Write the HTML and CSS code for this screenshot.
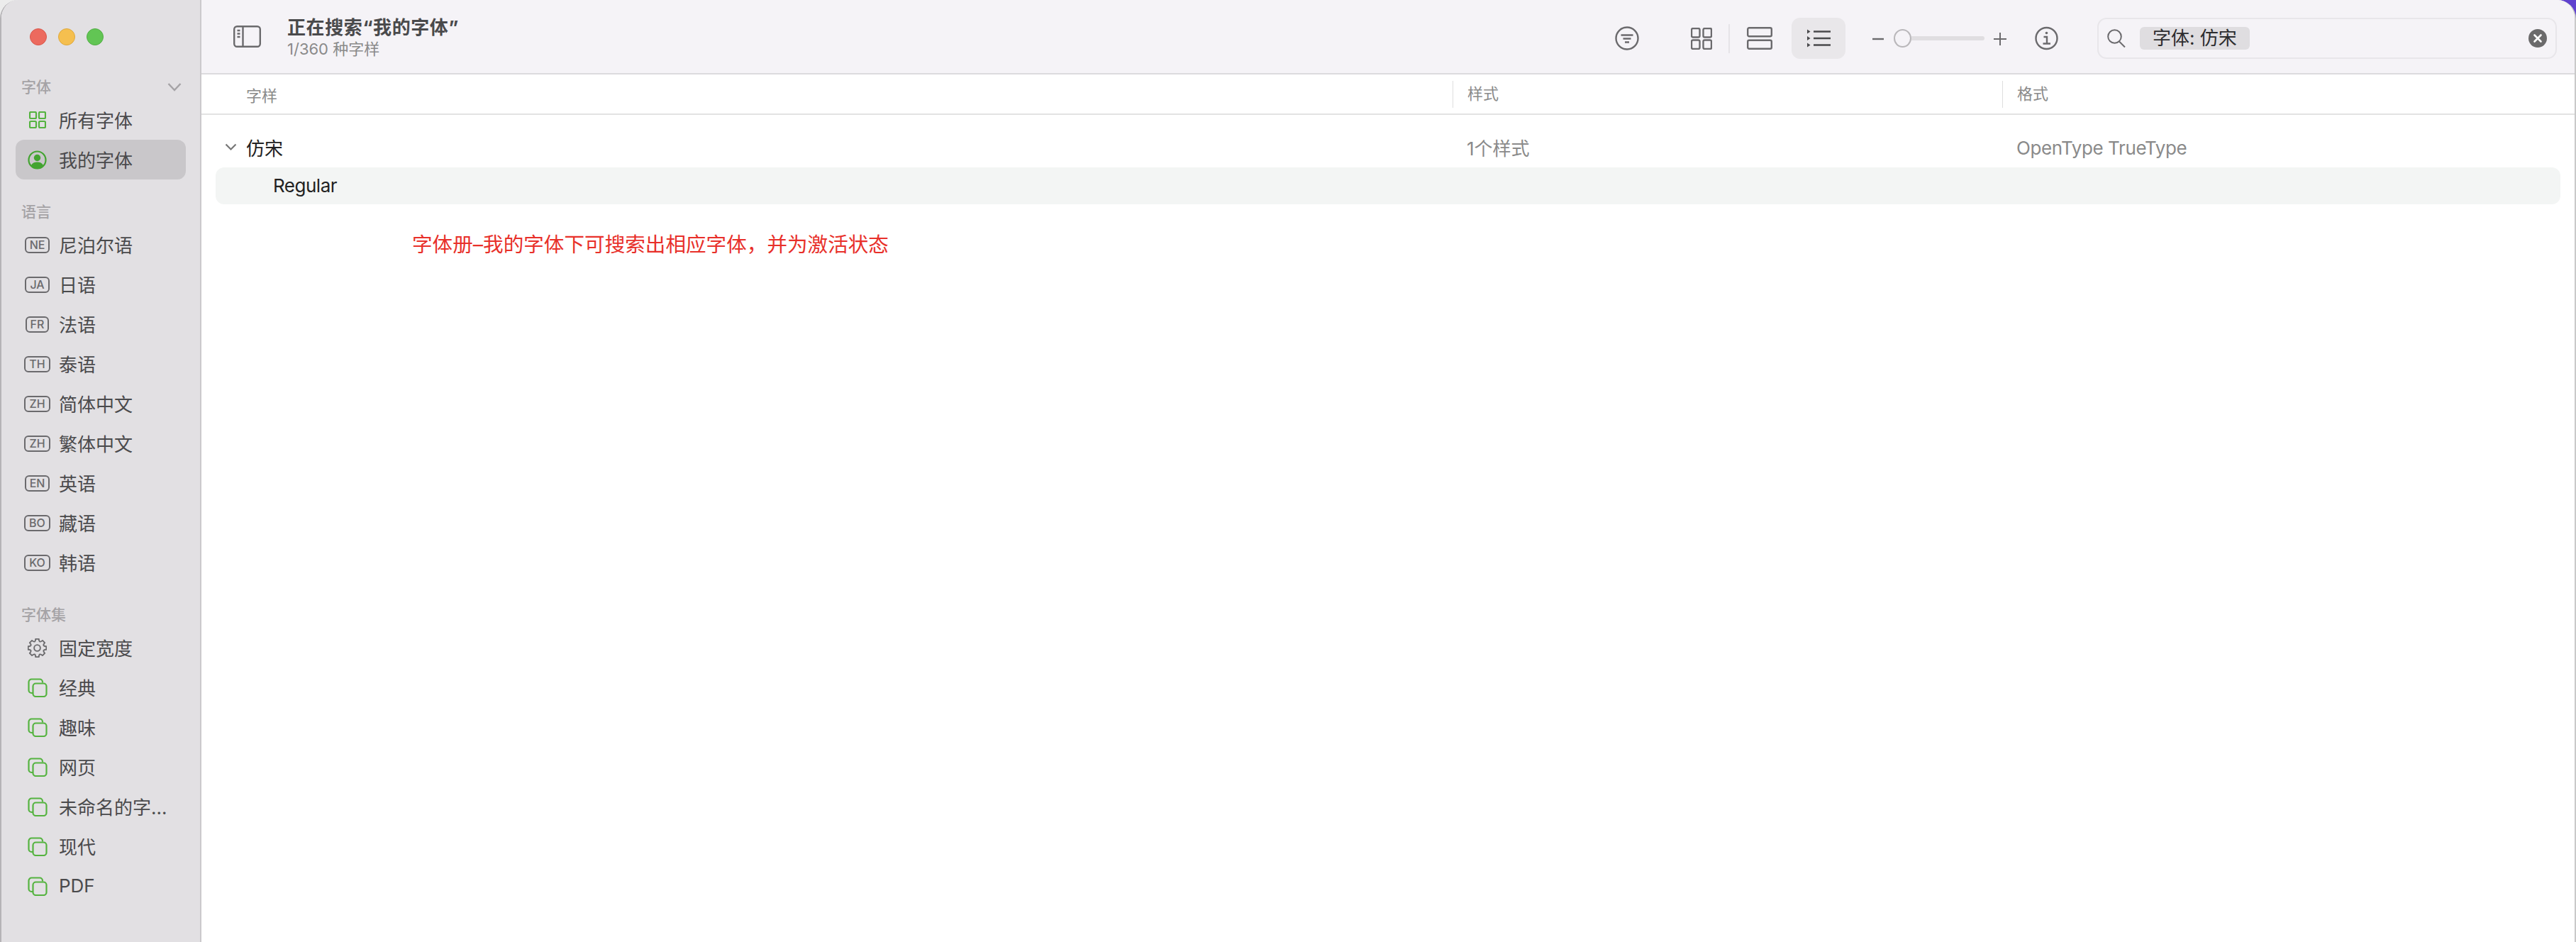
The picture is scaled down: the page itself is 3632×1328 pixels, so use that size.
FILE: index.html
```html
<!DOCTYPE html>
<html lang="zh-CN">
<head>
    <meta charset="UTF-8">
    <title>字体册</title>
    <link rel="stylesheet" href="styles.css">
</head>
<body>
<svg class="icon-defs" width="0" height="0">
    <symbol id="icon-collection" viewBox="0 0 28 27">
        <path d="M21 6.500V5.500a4 4 0 0 0-4-4H5.500a4 4 0 0 0-4 4V17a4 4 0 0 0 4 4h2"/>
        <rect x="7.500" y="7.500" width="19" height="18.500" rx="4"/>
    </symbol>
</svg>

<div class="window">
    <aside class="sidebar">
        <div class="traffic-lights">
            <span class="light light-red"></span>
            <span class="light light-yellow"></span>
            <span class="light light-green"></span>
        </div>

        <div class="section-label">
            <span>字体</span>
            <svg class="section-chevron" width="20" height="13" viewBox="0 0 20 13"><path d="M1.500 2l8.500 9 8.500-9"/></svg>
        </div>
        <div class="side-item">
            <span class="side-icon">
                <svg class="icon-green" width="24" height="24" viewBox="0 0 24 24">
                    <rect x="1" y="1" width="9" height="9" rx="1.500"/>
                    <rect x="14" y="1" width="9" height="9" rx="1.500"/>
                    <rect x="1" y="14" width="9" height="9" rx="1.500"/>
                    <rect x="14" y="14" width="9" height="9" rx="1.500"/>
                </svg>
            </span>
            所有字体
        </div>
        <div class="side-item selected">
            <span class="side-icon">
                <svg width="27" height="27" viewBox="0 0 27 27">
                    <circle cx="13.500" cy="13.500" r="12" fill="none" stroke="#43a431" stroke-width="2.200"/>
                    <circle cx="13.500" cy="10.500" r="4.700" fill="#43a431"/>
                    <path d="M4.800 21.500c1.800-3.800 5-5 8.700-5s6.900 1.200 8.700 5a12 12 0 0 1-17.400 0z" fill="#43a431"/>
                </svg>
            </span>
            我的字体
        </div>

        <div class="section-label spaced">语言</div>
        <div class="side-item"><span class="side-icon"><span class="lang-badge">NE</span></span>尼泊尔语</div>
        <div class="side-item"><span class="side-icon"><span class="lang-badge">JA</span></span>日语</div>
        <div class="side-item"><span class="side-icon"><span class="lang-badge">FR</span></span>法语</div>
        <div class="side-item"><span class="side-icon"><span class="lang-badge">TH</span></span>泰语</div>
        <div class="side-item"><span class="side-icon"><span class="lang-badge">ZH</span></span>简体中文</div>
        <div class="side-item"><span class="side-icon"><span class="lang-badge">ZH</span></span>繁体中文</div>
        <div class="side-item"><span class="side-icon"><span class="lang-badge">EN</span></span>英语</div>
        <div class="side-item"><span class="side-icon"><span class="lang-badge">BO</span></span>藏语</div>
        <div class="side-item"><span class="side-icon"><span class="lang-badge">KO</span></span>韩语</div>

        <div class="section-label spaced">字体集</div>
        <div class="side-item">
            <span class="side-icon">
                <svg class="icon-gear" width="27" height="27" viewBox="0 0 26 26">
                    <path d="M10.830.690L15.170.690Q15.490 7 20.170 2.760L23.240 5.830Q19 10.510 25.310 10.830L25.310 15.170Q19 15.490 23.240 20.170L20.170 23.240Q15.490 19 15.170 25.310L10.830 25.310Q10.510 19 5.830 23.240L2.760 20.170Q7 15.490.690 15.170L.690 10.830Q7 10.510 2.760 5.830L5.830 2.760Q10.510 7 10.830.690Z"/>
                    <circle cx="13" cy="13" r="4.200"/>
                </svg>
            </span>
            固定宽度
        </div>
        <div class="side-item"><span class="side-icon"><svg class="icon-green" width="28" height="27"><use href="#icon-collection"/></svg></span>经典</div>
        <div class="side-item"><span class="side-icon"><svg class="icon-green" width="28" height="27"><use href="#icon-collection"/></svg></span>趣味</div>
        <div class="side-item"><span class="side-icon"><svg class="icon-green" width="28" height="27"><use href="#icon-collection"/></svg></span>网页</div>
        <div class="side-item"><span class="side-icon"><svg class="icon-green" width="28" height="27"><use href="#icon-collection"/></svg></span>未命名的字…</div>
        <div class="side-item"><span class="side-icon"><svg class="icon-green" width="28" height="27"><use href="#icon-collection"/></svg></span>现代</div>
        <div class="side-item"><span class="side-icon"><svg class="icon-green" width="28" height="27"><use href="#icon-collection"/></svg></span>PDF</div>
    </aside>

    <main class="main">
        <header class="toolbar">
            <svg class="tool-icon toggle-icon" width="39" height="31" viewBox="0 0 39 31">
                <rect x="1.200" y="1.200" width="36.600" height="28.600" rx="4"/>
                <path d="M13.500 1.500v28M5.500 7h4M5.500 11.500h4M5.500 16h4"/>
            </svg>
            <div class="title-block">
                <div class="title">正在搜索“我的字体”</div>
                <div class="subtitle">1/360 种字样</div>
            </div>

            <div class="tools">
                <svg class="tool-icon filter-icon" width="34" height="34" viewBox="0 0 34 34">
                    <circle cx="17" cy="17" r="15.500"/>
                    <path d="M8.500 12.500h17M11.500 17.500h11M14 22.500h6"/>
                </svg>
                <svg class="tool-icon grid-icon" width="30" height="31" viewBox="0 0 30 31">
                    <rect x="1" y="1" width="11.500" height="12.500" rx="2"/>
                    <rect x="17.500" y="1" width="11.500" height="12.500" rx="2"/>
                    <rect x="1" y="17.500" width="11.500" height="12.500" rx="2"/>
                    <rect x="17.500" y="17.500" width="11.500" height="12.500" rx="2"/>
                </svg>
                <span class="tool-sep"></span>
                <svg class="tool-icon rows-icon" width="36" height="32" viewBox="0 0 36 32">
                    <rect x="1.200" y="1.200" width="33.600" height="12" rx="2"/>
                    <rect x="1.200" y="18.800" width="33.600" height="12" rx="2"/>
                </svg>
                <span class="list-button">
                    <svg width="33" height="26" viewBox="0 0 33 26">
                        <path class="list-marks" d="M0 .500l4.500 3-4.500 3zM0 10l4.500 3-4.500 3zM0 19.500l4.500 3-4.500 3z"/>
                        <path class="list-lines" d="M9 3.500h24M9 13h24M9 22.500h24"/>
                    </svg>
                </span>
                <svg class="tool-icon minus-icon" width="16" height="4" viewBox="0 0 16 4"><path d="M0 2h16"/></svg>
                <div class="slider">
                    <span class="slider-thumb"></span>
                    <span class="slider-track"></span>
                </div>
                <svg class="tool-icon plus-icon" width="18" height="18" viewBox="0 0 18 18"><path d="M0 9h18M9 0v18"/></svg>
                <svg class="tool-icon info-icon" width="33" height="34" viewBox="0 0 33 34">
                    <circle cx="16.500" cy="17" r="15"/>
                    <circle class="info-dot" cx="16.500" cy="9.500" r="1.800"/>
                    <path d="M12.500 15h4.500v9M11.500 24.500h10.500"/>
                </svg>
                <div class="search-box">
                    <svg class="tool-icon search-icon" width="26" height="26" viewBox="0 0 26 26">
                        <circle cx="10.500" cy="10.500" r="9.300"/>
                        <path d="M17 17.500l8 8"/>
                    </svg>
                    <span class="search-token">字体: 仿宋</span>
                    <svg class="search-clear" width="26" height="26" viewBox="0 0 26 26">
                        <circle cx="13" cy="13" r="13" fill="#6b6a6b"/>
                        <path d="M8.500 8.500l9 9M17.500 8.500l-9 9" stroke="#fff" stroke-width="2.600" stroke-linecap="round"/>
                    </svg>
                </div>
            </div>
        </header>

        <div class="table-head">
            <div class="col col-name">字样</div>
            <div class="col col-sep">样式</div>
            <div class="col col-sep">格式</div>
        </div>

        <div class="font-list">
            <div class="font-row">
                <div class="col col-name font-name">
                    <svg class="row-chevron" width="17" height="10" viewBox="0 0 17 10"><path d="M1.500 1.500l7 7 7-7"/></svg>
                    仿宋
                </div>
                <div class="col font-meta">1个样式</div>
                <div class="col font-meta latin-meta">OpenType TrueType</div>
            </div>
            <div class="style-row">Regular</div>
            <p class="note">字体册–我的字体下可搜索出相应字体，并为激活状态</p>
        </div>
    </main>
</div>
</body>
</html>
```

FILE: styles.css
```css
:root {
    --sidebar-bg: #e2e0e3;
    --toolbar-bg: #f5f3f7;
    --text: #4a4a4c;
    --muted: #8a8a8a;
    --label: #a5a3a6;
    --icon: #6b6a6d;
    --green: #55b340;
    --line: #e3e3e3;
}

* {
    margin: 0;
    padding: 0;
    box-sizing: border-box;
}

body {
    height: 1328px;
    overflow: hidden;
    font-family: "Inter", "Noto Sans CJK SC", sans-serif;
    background: linear-gradient(90deg, #ececec 50%, #5f41cf 50%);
}

.icon-defs {
    display: block;
    height: 0;
}

.window {
    display: flex;
    height: 1328px;
    overflow: hidden;
    border-left: 2px solid #b5b3b6;
    border-right: 2px solid #c9c9c9;
    border-radius: 26px 26px 0 0;
    background-color: #fff;
}

/* sidebar */

.sidebar {
    flex: 0 0 282px;
    padding: 0 20px;
    background-color: var(--sidebar-bg);
    border-right: 2px solid #cbc9cc;
}

.traffic-lights {
    display: flex;
    gap: 16px;
    align-items: center;
    height: 103px;
    padding-left: 20px;
}

.light {
    width: 24px;
    height: 24px;
    border-radius: 50%;
}

.light-red {
    background-color: #ec6a5e;
    border: 1px solid #d9574b;
}

.light-yellow {
    background-color: #f5bf4f;
    border: 1px solid #dea83c;
}

.light-green {
    background-color: #62c554;
    border: 1px solid #52ad45;
}

.section-label {
    display: flex;
    align-items: center;
    justify-content: space-between;
    height: 38px;
    padding: 0 6px 2px 8px;
    font-size: 21px;
    font-weight: 500;
    color: var(--label);
}

.section-label.spaced {
    margin-top: 26px;
}

.section-chevron {
    margin-top: 2px;
    fill: none;
    stroke: var(--label);
    stroke-width: 2.500;
}

.side-item {
    display: flex;
    align-items: center;
    height: 56px;
    padding-bottom: 2px;
    font-size: 26px;
    white-space: nowrap;
    color: var(--text);
    border-radius: 12px;
}

.side-item.selected {
    background-color: #c9c7ca;
}

.side-icon {
    display: flex;
    flex: 0 0 61px;
    justify-content: center;
    margin-top: 2px;
}

.icon-green {
    fill: none;
    stroke: var(--green);
    stroke-width: 2.200;
}

.icon-gear {
    fill: none;
    stroke: var(--icon);
    stroke-width: 1.800;
    stroke-linejoin: round;
}

.lang-badge {
    height: 23px;
    padding: 0 5px;
    font-size: 16px;
    font-weight: 500;
    line-height: 19px;
    color: var(--icon);
    border: 2px solid var(--icon);
    border-radius: 6px;
}

/* toolbar */

.main {
    display: flex;
    flex: 1;
    flex-direction: column;
    min-width: 0;
}

.toolbar {
    display: flex;
    flex: 0 0 105px;
    align-items: center;
    padding: 5px 25px 0 45px;
    background-color: var(--toolbar-bg);
    border-bottom: 2px solid #dcdbde;
}

.tool-icon {
    flex: none;
    fill: none;
    stroke: var(--icon);
    stroke-width: 2.400;
}

.toggle-icon {
    margin-top: -6px;
}

.title-block {
    margin-left: 37px;
    white-space: nowrap;
}

.title {
    font-size: 26px;
    font-weight: 700;
    line-height: 30px;
    letter-spacing: .6px;
    color: var(--text);
}

.subtitle {
    font-size: 22px;
    line-height: 30px;
    color: var(--muted);
}

.tools {
    display: flex;
    align-items: center;
    margin-left: auto;
}

.grid-icon {
    margin-left: 73px;
}

.tool-sep {
    width: 2px;
    height: 41px;
    margin: 0 24px 0 23px;
    background-color: #e6e4e8;
}

.list-button {
    display: flex;
    align-items: center;
    justify-content: center;
    width: 76px;
    height: 58px;
    margin-left: 27px;
    background-color: #e9e7ea;
    border-radius: 12px;
}

.list-marks {
    fill: var(--text);
}

.list-lines {
    fill: none;
    stroke: var(--text);
    stroke-width: 2.600;
}

.minus-icon {
    margin: 2px 14px 0 38px;
}

.slider {
    display: flex;
    align-items: center;
    width: 128px;
}

.slider-thumb {
    flex: none;
    width: 25px;
    height: 26px;
    background-color: var(--toolbar-bg);
    border: 2px solid #b9b7ba;
    border-radius: 50%;
}

.slider-track {
    flex: 1;
    height: 6px;
    background-color: #e0dee1;
    border-radius: 0 3px 3px 0;
}

.plus-icon {
    stroke-width: 2;
    margin: 2px 0 0 13px;
}

.info-icon {
    margin-left: 40px;
}

.info-dot {
    fill: var(--icon);
    stroke: none;
}

.search-box {
    display: flex;
    align-items: center;
    width: 648px;
    height: 58px;
    margin-left: 55px;
    padding: 0 12px 0 12px;
    border: 2px solid #e8e6ea;
    border-radius: 13px;
}

.search-icon {
    stroke-width: 2;
}

.search-token {
    padding: 0 18px;
    margin-left: 20px;
    font-size: 26px;
    line-height: 32px;
    white-space: nowrap;
    color: #2c2c2e;
    background-color: #dfdde0;
    border-radius: 6px;
}

.search-clear {
    margin-left: auto;
}

/* font table */

.table-head,
.font-row {
    display: grid;
    grid-template-columns: 1764px 775px 1fr;
}

.table-head {
    flex: 0 0 57px;
    align-items: center;
    border-bottom: 2px solid var(--line);
    font-size: 22px;
    color: var(--muted);
}

.col {
    padding-left: 20px;
}

.col-name {
    padding-left: 63px;
}

.col-sep {
    height: 38px;
    line-height: 36px;
    border-left: 1px solid #dedede;
}

.font-list {
    padding-top: 21px;
}

.font-row {
    align-items: center;
    height: 52px;
    margin-bottom: 1px;
    padding-bottom: 3px;
    font-size: 26px;
}

.font-name {
    position: relative;
    color: #222;
}

.row-chevron {
    position: absolute;
    left: 33px;
    top: 13px;
    fill: none;
    stroke: #777;
    stroke-width: 2.200;
}

.font-meta {
    color: var(--muted);
}

.latin-meta {
    padding-top: 2px;
    letter-spacing: -.4px;
}

.style-row {
    height: 52px;
    margin: 0 20px;
    padding-left: 81px;
    font-size: 26px;
    line-height: 52px;
    letter-spacing: -.5px;
    color: #222;
    background-color: #f3f5f4;
    border-radius: 12px;
}

.note {
    margin: 40px 0 0 297px;
    font-size: 28.600px;
    line-height: 34px;
    color: #e8302a;
}
```
